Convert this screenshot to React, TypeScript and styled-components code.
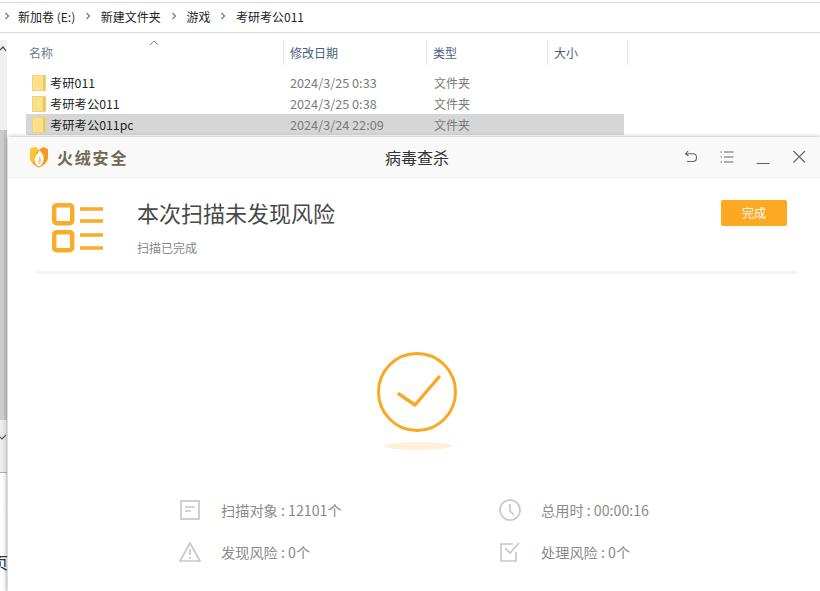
import React from "react";
import styled, { createGlobalStyle } from "styled-components";

const Global = createGlobalStyle`
  html, body { margin: 0; padding: 0; background: #fff; }
  body { font-family: "Noto Sans CJK SC", "Liberation Sans", sans-serif; }
`;

const Desktop = styled.div`
  position: relative;
  width: 820px;
  height: 591px;
  overflow: hidden;
  background: #fff;
`;

const Explorer = styled.div`
  display: flex;
  flex-direction: column;
  height: 137px;
`;

const AddressBar = styled.div`
  display: flex;
  align-items: center;
  height: 26px;
  padding: 0 0 3px 3px;
  margin-top: 2px;
  border-top: 1px solid #d9d9d9;
  border-bottom: 1px solid #d9d9d9;
  font-size: 12px;
  color: #222;
`;

const Crumb = styled.span`
  white-space: nowrap;
`;

const Chevron = styled.svg`
  width: 8px;
  height: 8px;
  margin: 0 8.8px;
  flex: none;
  &:first-child { margin: 0 7px 0 0; }
`;

const Columns = styled.div`
  position: relative;
  display: grid;
  grid-template-columns: 284px 143px 121px 80px;
  height: 32px;
  margin-top: 7px;
`;

const Column = styled.div<{ $pad: number }>`
  display: flex;
  align-items: center;
  height: 25px;
  padding-left: ${(p) => p.$pad}px;
  font-size: 12px;
  color: #4c607a;
  border-right: 1px solid #e6e6e6;
  box-sizing: border-box;
  &:first-of-type { color: #6b7a8c; }
`;

const SortArrow = styled.svg`
  position: absolute;
  left: 149px;
  top: 0;
  width: 10px;
  height: 6px;
`;

const Rows = styled.div`
  display: flex;
  flex-direction: column;
`;

const Row = styled.div<{ $selected?: boolean }>`
  display: grid;
  grid-template-columns: 264px 144px 1fr;
  align-items: center;
  width: 598px;
  height: 21px;
  margin-left: 26px;
  font-size: 12px;
  color: #7a7a7a;
  background: ${(p) => (p.$selected ? "#d6d6d6" : "transparent")};
`;

const NameCell = styled.div`
  display: flex;
  align-items: center;
  gap: 4px;
  padding-left: 6px;
  font-size: 12.3px;
  color: #222;
`;

const DateCell = styled.div`
  font-size: 12.7px;
  white-space: nowrap;
`;

const TypeCell = styled.div`
  white-space: nowrap;
`;

const Folder = styled.svg`
  width: 14px;
  height: 16px;
  flex: none;
`;

const SideEdge = styled.div`
  position: absolute;
  left: 0;
  top: 40px;
  width: 7px;
  height: 90px;
  background: #f0f0f0;
`;

const SideDark = styled.div`
  position: absolute;
  left: 0;
  top: 130px;
  width: 7px;
  height: 290px;
  background: linear-gradient(to right, #cccccc 0, #cccccc 4px, #bdbdbd 4px, #bdbdbd 100%);
`;

const SideFade = styled.div`
  position: absolute;
  left: 0;
  top: 420px;
  width: 7px;
  height: 52px;
  background: linear-gradient(to right, #f0f0f0, #dcdcdc);
  border-bottom: 1px solid #aaa;
`;

const SideLower = styled.div`
  position: absolute;
  left: 0;
  top: 473px;
  width: 7px;
  height: 118px;
  background: linear-gradient(to right, #fff, #fff 3px, #e0e0e0 100%);
`;

const EdgeMark = styled.svg<{ $top: number }>`
  position: absolute;
  left: 0;
  top: ${(p) => p.$top}px;
  width: 6px;
  height: 6px;
`;

const EdgeGlyph = styled.span`
  position: absolute;
  left: -8px;
  top: 552px;
  font-size: 16px;
  line-height: 20px;
  color: #333;
`;

const Dialog = styled.div`
  position: absolute;
  left: 8px;
  top: 137px;
  width: 812px;
  height: 454px;
  display: flex;
  flex-direction: column;
  background: #fff;
  box-shadow: 0 0 4px rgba(0, 0, 0, 0.35);
`;

const TitleBar = styled.div`
  position: relative;
  display: flex;
  align-items: center;
  justify-content: space-between;
  height: 40px;
  flex: none;
  background: #f8f9f8;
  border-bottom: 1px solid #f0f0f0;
  padding: 0 13px 0 21px;
`;

const Brand = styled.div`
  display: flex;
  align-items: center;
  gap: 8px;
`;

const BrandName = styled.span`
  font-size: 16px;
  font-weight: 700;
  letter-spacing: 1.8px;
  color: #6f6a52;
`;

const TitleText = styled.span`
  position: absolute;
  left: 377px;
  top: 9px;
  font-size: 16px;
  line-height: 22px;
  color: #333;
`;

const WindowButtons = styled.div`
  display: flex;
  align-items: center;
  gap: 20px;
`;

const WinIcon = styled.svg`
  width: 16px;
  height: 16px;
  fill: none;
  stroke: #666;
  stroke-width: 1.1;
`;

const Summary = styled.div`
  display: flex;
  align-items: flex-start;
  height: 93px;
  margin: 0 23px 0 28px;
  border-bottom: 3px solid #f3f3f3;
  flex: none;
`;

const SummaryIcon = styled.svg`
  width: 52px;
  height: 52px;
  margin: 25px 0 0 16px;
  flex: none;
`;

const SummaryText = styled.div`
  display: flex;
  flex-direction: column;
  margin: 18px 0 0 33px;
`;

const Headline = styled.div`
  font-size: 22px;
  line-height: 32px;
  color: #484848;
`;

const SubText = styled.div`
  margin-top: 11px;
  font-size: 12px;
  line-height: 18px;
  color: #888;
`;

const DoneButton = styled.button`
  margin: 22px 10px 0 auto;
  width: 66px;
  height: 26px;
  border: 0;
  border-radius: 2px;
  background: #fca822;
  color: #fff;
  font: inherit;
  font-size: 12px;
  padding: 0 0 2px;
`;

const Result = styled.div`
  display: flex;
  flex-direction: column;
  align-items: center;
  margin-top: 78px;
  padding-left: 6px;
  flex: none;
`;

const Check = styled.svg`
  width: 80px;
  height: 80px;
`;

const Shadow = styled.div`
  width: 68px;
  height: 8px;
  margin: 10px 0 0 2px;
  border-radius: 50%;
  background: #fdf0dc;
`;

const Stats = styled.div`
  display: grid;
  grid-template-columns: 320px 200px;
  grid-auto-rows: 42px;
  margin: 39px 0 0 171px;
`;

const Stat = styled.div`
  display: flex;
  align-items: center;
  gap: 20px;
  font-size: 14.2px;
  color: #8a8a8a;
  white-space: nowrap;
`;

const StatIcon = styled.svg`
  width: 22px;
  height: 22px;
  flex: none;
  fill: none;
  stroke: #c8c8c8;
  stroke-width: 1.7;
`;

const FolderIcon = () => (
  <Folder viewBox="0 0 14 16">
    <rect x="0.5" y="0.5" width="13" height="15" fill="#fde08a" stroke="#f0d47c" />
    <rect x="11" y="1" width="2" height="14" fill="#eec35a" />
  </Folder>
);

const Chev = () => (
  <Chevron viewBox="0 0 8 8">
    <path d="M2.5 1 L5.5 4 L2.5 7" fill="none" stroke="#777" strokeWidth="1.2" />
  </Chevron>
);

const rows = [
  { name: "考研011", date: "2024/3/25 0:33" },
  { name: "考研考公011", date: "2024/3/25 0:38" },
  { name: "考研考公011pc", date: "2024/3/24 22:09", selected: true },
];

export default function App() {
  return (
    <Desktop>
      <Global />
      <Explorer>
        <AddressBar>
          <Chev />
          <Crumb>新加卷 (E:)</Crumb>
          <Chev />
          <Crumb>新建文件夹</Crumb>
          <Chev />
          <Crumb>游戏</Crumb>
          <Chev />
          <Crumb>考研考公011</Crumb>
        </AddressBar>
        <Columns>
          <SortArrow viewBox="0 0 10 6">
            <path d="M1 5 L5 1 L9 5" fill="none" stroke="#888" strokeWidth="1" />
          </SortArrow>
          <Column $pad={29}>名称</Column>
          <Column $pad={6}>修改日期</Column>
          <Column $pad={6}>类型</Column>
          <Column $pad={6}>大小</Column>
        </Columns>
        <Rows>
          {rows.map((r) => (
            <Row key={r.name} $selected={r.selected}>
              <NameCell>
                <FolderIcon />
                {r.name}
              </NameCell>
              <DateCell>{r.date}</DateCell>
              <TypeCell>文件夹</TypeCell>
            </Row>
          ))}
        </Rows>
      </Explorer>
      <SideEdge />
      <SideDark />
      <SideFade />
      <SideLower />
      <EdgeMark viewBox="0 0 6 6" $top={46}>
        <path d="M0 4 L3 1 L6 5" fill="none" stroke="#444" strokeWidth="1.2" />
      </EdgeMark>
      <EdgeMark viewBox="0 0 6 6" $top={434}>
        <path d="M0 3 L2 5 L6 1" fill="none" stroke="#555" strokeWidth="1.2" />
      </EdgeMark>
      <EdgeGlyph>页</EdgeGlyph>
      <Dialog>
        <TitleBar>
          <Brand>
            <svg width="20" height="22" viewBox="0 0 20 22">
              <path d="M1 3 L6 1 L10 4 L14 1 L19 3 L19 11 C19 16 15 19.5 10 21.5 C5 19.5 1 16 1 11 Z" fill="#f59a1c" />
              <path d="M1 3 L6 1 L10 4 C6 8 4 12 5 18 C2.5 16 1 14 1 11 Z" fill="#fcc62d" />
              <path d="M10.5 4.5 C14.5 8 15.5 12 14 16 C13 18.5 11.5 20 10 20.5 C6.5 19 4.5 15 6 11 C7 8.5 9.5 7 10.5 4.5 Z" fill="#fff" />
              <path d="M11 10 C12.5 13 12.5 16 10.2 19 C8.7 17 8.7 13 11 10 Z" fill="#f6c98a" />
            </svg>
            <BrandName>火绒安全</BrandName>
          </Brand>
          <TitleText>病毒查杀</TitleText>
          <WindowButtons>
            <WinIcon viewBox="0 0 16 16">
              <path d="M5 2 L2.5 4.8 L5.5 7 M2.5 4.8 H10 C12.5 4.8 13.5 6.5 13.5 8.5 C13.5 11 12 12.5 10 12.5 H4" />
            </WinIcon>
            <WinIcon viewBox="0 0 16 16">
              <path d="M1.5 3 H3 M5 3 H14.5 M1.5 8 H3 M5 8 H14.5 M1.5 13 H3 M5 13 H14.5" />
            </WinIcon>
            <WinIcon viewBox="0 0 16 16">
              <path d="M1.5 14.5 H14.5" />
            </WinIcon>
            <WinIcon viewBox="0 0 16 16">
              <path d="M2.5 2 L14 13.5 M14 2 L2.5 13.5" />
            </WinIcon>
          </WindowButtons>
        </TitleBar>
        <Summary>
          <SummaryIcon viewBox="0 0 52 52">
            <g fill="none" stroke="#fbab2c" strokeWidth="4.5">
              <rect x="2.2" y="2.2" width="18" height="18" rx="2.5" />
              <rect x="2.2" y="29.2" width="18" height="18" rx="2.5" />
            </g>
            <g stroke="#fbab2c" strokeWidth="3.6">
              <path d="M28 6 H51 M28 18 H51 M28 32 H51 M28 45 H51" />
            </g>
          </SummaryIcon>
          <SummaryText>
            <Headline>本次扫描未发现风险</Headline>
            <SubText>扫描已完成</SubText>
          </SummaryText>
          <DoneButton>完成</DoneButton>
        </Summary>
        <Result>
          <Check viewBox="0 0 80 80">
            <circle cx="40" cy="40" r="38.5" fill="none" stroke="#f8a823" strokeWidth="3" />
            <path d="M22 42 L38 53 L62 25" fill="none" stroke="#f8a823" strokeWidth="3.4" strokeLinecap="round" strokeLinejoin="round" />
          </Check>
          <Shadow />
        </Result>
        <Stats>
          <Stat>
            <StatIcon viewBox="0 0 22 22">
              <rect x="2" y="2" width="18" height="18" />
              <path d="M6 8 H16 M6 12 H12" />
            </StatIcon>
            扫描对象 : 12101个
          </Stat>
          <Stat>
            <StatIcon viewBox="0 0 22 22">
              <circle cx="11" cy="11" r="10" />
              <path d="M11 5 V12 L15 16" />
            </StatIcon>
            总用时 : 00:00:16
          </Stat>
          <Stat>
            <StatIcon viewBox="0 0 22 22">
              <path d="M11 2 L21 20 H1 Z" />
              <path d="M11 8 V14 M11 16 V18" />
            </StatIcon>
            发现风险 : 0个
          </Stat>
          <Stat>
            <StatIcon viewBox="0 0 22 22">
              <path d="M17 11 V20 H2 V3 H14" />
              <path d="M6 7 L11 12 L20 2" />
            </StatIcon>
            处理风险 : 0个
          </Stat>
        </Stats>
      </Dialog>
    </Desktop>
  );
}
